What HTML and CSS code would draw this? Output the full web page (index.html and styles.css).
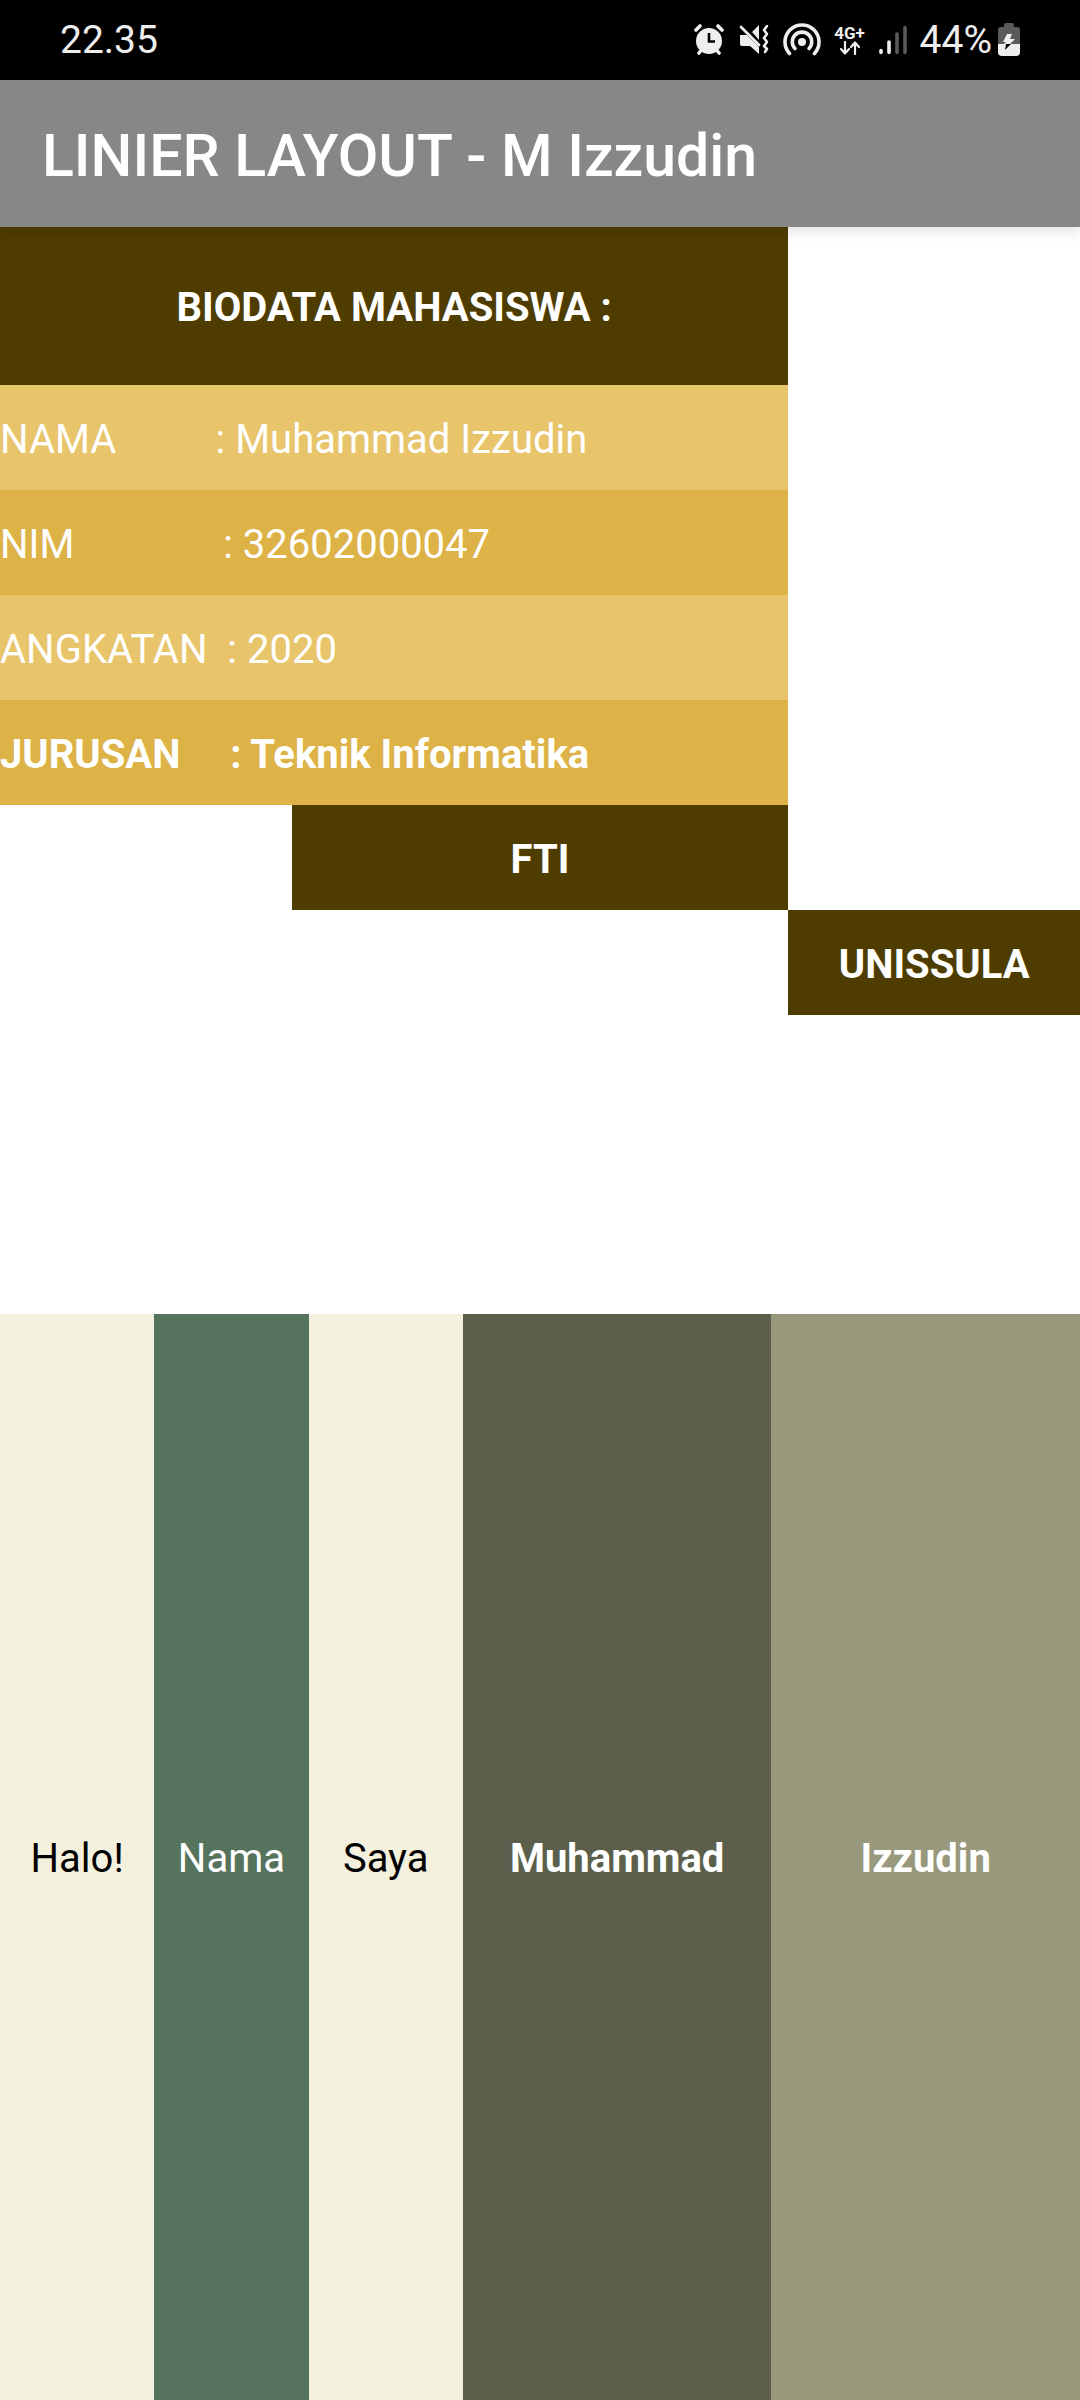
FILE: index.html
```html
<!DOCTYPE html>
<html lang="id">
<head>
  <meta charset="utf-8">
  <meta name="viewport" content="width=device-width, initial-scale=1">
  <title>LINIER LAYOUT - M Izzudin</title>
  <link rel="stylesheet" href="styles.css">
</head>
<body>
  <div class="status-bar">
    <time class="clock">22.35</time>
    <div class="status-icons">
      <svg class="icon" width="32" height="32" viewBox="0 0 32 32" aria-label="Alarm">
        <circle cx="16" cy="17" r="13" fill="#eee"/>
        <path d="M3 6l4-4M29 6l-4-4M6 29l4-5M26 29l-4-5" stroke="#eee" stroke-width="3.6" stroke-linecap="round"/>
        <path d="M16 9v8.500h6" fill="none" stroke="#000" stroke-width="2.600"/>
      </svg>
      <svg class="icon" width="32" height="32" viewBox="0 0 32 32" aria-label="Senyap">
        <path d="M2 11h7l12 12v7l-9-8H4q-2 0-2-2zM14 8l7-7v15z" fill="#eee"/>
        <path d="M3 3l18 18" stroke="#eee" stroke-width="2.800" stroke-linecap="round"/>
        <path d="M29 2l-3 4 3 4-3 4 3 4-3 4 3 3-2 3" fill="none" stroke="#eee" stroke-width="2.600" stroke-linecap="round" stroke-linejoin="round"/>
      </svg>
      <svg class="icon" width="38" height="34" viewBox="0 0 38 34" aria-label="Hotspot">
        <g fill="none" stroke="#eee" stroke-width="3.600" stroke-linecap="round">
          <path d="M6.500 30.500a17 17 0 1 1 25 0"/>
          <path d="M12 25.500a9.700 9.700 0 1 1 14 0"/>
        </g>
        <circle cx="19" cy="19" r="4" fill="#eee"/>
      </svg>
      <div class="network">
        <span>4G+</span>
        <svg width="20" height="14" viewBox="0 0 20 14" aria-label="Data">
          <path d="M5 1v11M1 8l4 4.500L9 8M15 13V2M11 6l4-4.500L19 6" fill="none" stroke="#eee" stroke-width="2.200" stroke-linecap="round" stroke-linejoin="round"/>
        </svg>
      </div>
      <svg class="icon" width="28" height="30" viewBox="0 0 28 30" aria-label="Sinyal">
        <path d="M2 25.500v2M10 17v10.500" stroke="#eee" stroke-width="3.600" stroke-linecap="round"/>
        <path d="M18 9v18.500M26 2.500v25" stroke="#5a5a5a" stroke-width="3.600" stroke-linecap="round"/>
      </svg>
      <div class="battery">
        <span>44%</span>
        <svg class="icon" width="22" height="34" viewBox="0 0 22 34" aria-label="Baterai">
          <path d="M6 2q0-2 2-2h6q2 0 2 2v2h3q3 0 3 3v14H0V7q0-3 3-3h3z" fill="#5a5a5a"/>
          <path d="M0 21h22v8q0 4-4 4H4q-4 0-4-4z" fill="#eee"/>
          <path d="M9 11h5l-2 5h5l-5 5H6l2-2H5z" fill="#eee"/>
          <path d="M8 21h5l-6 6z" fill="#000"/>
        </svg>
      </div>
    </div>
  </div>

  <header class="app-bar">
    <h1 class="app-title">LINIER LAYOUT - M Izzudin</h1>
  </header>

  <main class="content">
    <section class="biodata">
      <h2 class="heading">BIODATA MAHASISWA :</h2>
      <p class="row light">NAMA          : Muhammad Izzudin</p>
      <p class="row dark">NIM               : 32602000047</p>
      <p class="row light">ANGKATAN  : 2020</p>
      <p class="row dark bold">JURUSAN     : Teknik Informatika</p>
      <p class="tag faculty">FTI</p>
      <p class="tag campus">UNISSULA</p>
    </section>
    <section class="columns">
      <p class="column cream">Halo!</p>
      <p class="column green">Nama</p>
      <p class="column cream">Saya</p>
      <p class="column wide olive">Muhammad</p>
      <p class="column wide sage">Izzudin</p>
    </section>
  </main>
</body>
</html>
```
FILE: styles.css
```css
* {
  box-sizing: border-box;
  margin: 0;
}

body {
  display: flex;
  flex-direction: column;
  min-height: 100vh;
  background: #fff;
  color: #fff;
  font: 400 40px/48px Roboto, sans-serif;
}

.status-bar {
  display: flex;
  align-items: center;
  justify-content: space-between;
  height: 80px;
  padding: 0 60px;
  background: #000;
  color: #eee;
  font-size: 39px;
}

.status-icons {
  display: flex;
  align-items: center;
  gap: 13px;
}

.icon {
  display: block;
}

.battery {
  display: flex;
  align-items: center;
  gap: 6px;
}

.network {
  display: flex;
  flex-direction: column;
  align-items: center;
  width: 32px;
  font-size: 17px;
  font-weight: 700;
  line-height: 16px;
}

.app-bar {
  z-index: 1;
  display: flex;
  align-items: center;
  height: 147px;
  padding: 4px 42px 0;
  background: #878787;
  box-shadow: 0 4px 12px rgba(0, 0, 0, 0.13);
}

.app-title {
  font-size: 59px;
  font-weight: 500;
  line-height: 68px;
}

.content {
  display: grid;
  grid-template-rows: 1fr 1fr;
  flex: 1;
}

.biodata {
  display: flex;
  flex-direction: column;
}

.heading,
.row,
.tag,
.column {
  display: flex;
  align-items: center;
  padding-top: 4px;
}

.heading,
.row {
  width: 73%;
  height: 105px;
  white-space: pre;
}

.heading {
  justify-content: center;
  height: 158px;
  background: #4f3c00;
  font-size: 40px;
  font-weight: 700;
}

.light {
  background: #e8c46b;
}

.dark {
  background: #ddb246;
}

.bold {
  font-weight: 700;
}

.tag {
  justify-content: center;
  height: 105px;
  background: #4f3c00;
  font-weight: 700;
}

.faculty {
  margin: 0 27%;
}

.campus {
  width: 27%;
  margin-left: auto;
}

.columns {
  display: flex;
}

.column {
  flex: 1 1 0;
  justify-content: center;
}

.wide {
  flex-grow: 2;
  font-weight: 700;
}

.cream {
  background: #f4f0de;
  color: #000;
}

.green {
  background: #56735d;
}

.olive {
  background: #5c5f4b;
}

.sage {
  background: #98987d;
}
```
